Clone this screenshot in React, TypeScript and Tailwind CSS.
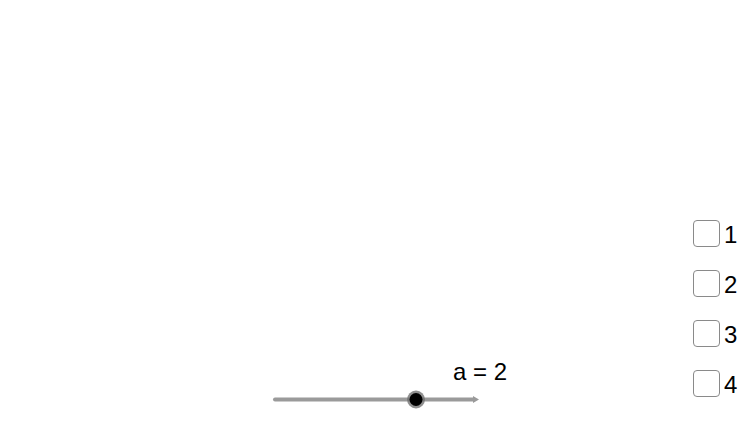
const font = { fontFamily: '"Liberation Sans", Arial, sans-serif' };

function CheckRow({ label }: { label: string }) {
  return (
    <div className="flex h-[26px] items-center">
      <div className="h-[27px] w-[27px] rounded-[4px] border border-[#8a8a8a] bg-white" />
      <span className="ml-[4px] mt-[4px] text-[24px] leading-none text-black">{label}</span>
    </div>
  );
}

export default function App() {
  return (
    <div
      className="relative h-[425px] w-[745px] overflow-hidden bg-white"
      style={font}
    >
      {/* slider */}
      <div className="absolute left-[453px] top-[360px] text-[24px] leading-none text-black">
        a = 2
      </div>
      <svg
        className="absolute left-0 top-0"
        width="745"
        height="425"
        viewBox="0 0 745 425"
      >
        <line
          x1="275"
          y1="399.5"
          x2="474"
          y2="399.5"
          stroke="#9a9a9a"
          strokeWidth="4"
          strokeLinecap="round"
        />
        <path d="M473 396 L479 399.5 L473 403 Z" fill="#9a9a9a" />
        <circle cx="416" cy="399.5" r="9" fill="#6a6a6a" opacity="0.75" />
        <circle cx="416" cy="399.5" r="6.5" fill="#000" />
      </svg>

      {/* checkboxes */}
      <div className="absolute left-[693px] top-[220px] flex flex-col gap-[24px]">
        <CheckRow label="1" />
        <CheckRow label="2" />
        <CheckRow label="3" />
        <CheckRow label="4" />
      </div>
    </div>
  );
}
